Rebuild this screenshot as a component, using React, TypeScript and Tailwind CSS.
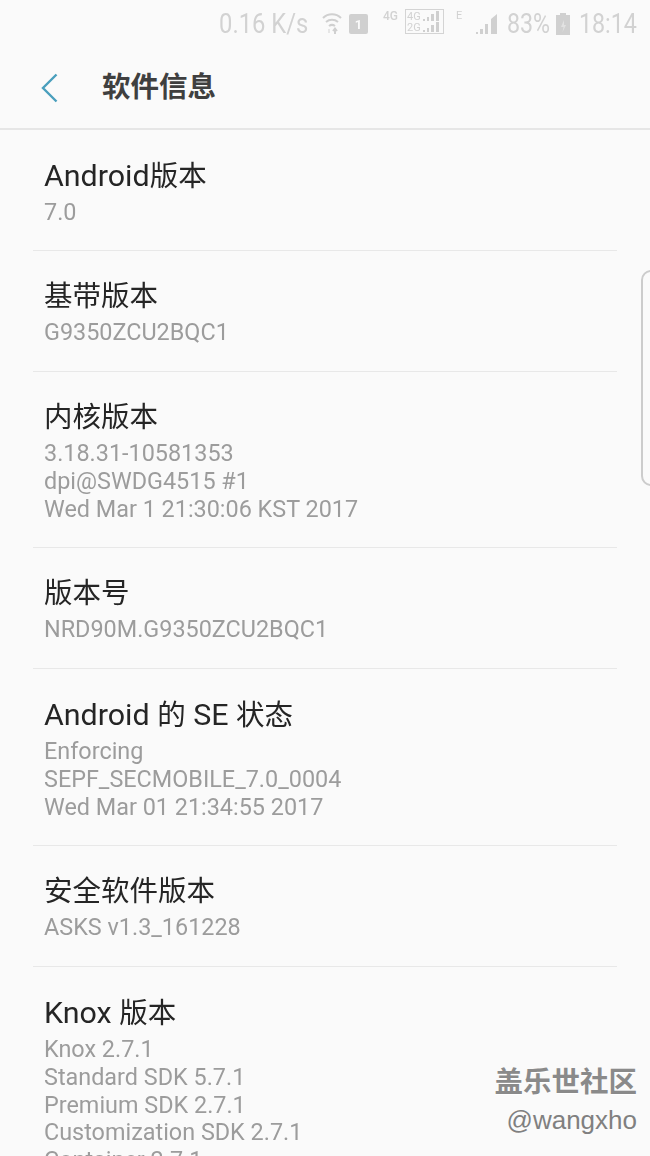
import React from "react";

interface InfoRow {
  title: string;
  lines: string[];
}

const cjkSans = "font-['Roboto','Noto_Sans_CJK_SC',sans-serif]";

const rows: InfoRow[] = [
  { title: "Android版本", lines: ["7.0"] },
  { title: "基带版本", lines: ["G9350ZCU2BQC1"] },
  {
    title: "内核版本",
    lines: ["3.18.31-10581353", "dpi@SWDG4515 #1", "Wed Mar 1 21:30:06 KST 2017"],
  },
  { title: "版本号", lines: ["NRD90M.G9350ZCU2BQC1"] },
  {
    title: "Android 的 SE 状态",
    lines: ["Enforcing", "SEPF_SECMOBILE_7.0_0004", "Wed Mar 01 21:34:55 2017"],
  },
  { title: "安全软件版本", lines: ["ASKS v1.3_161228"] },
  {
    title: "Knox 版本",
    lines: [
      "Knox 2.7.1",
      "Standard SDK 5.7.1",
      "Premium SDK 2.7.1",
      "Customization SDK 2.7.1",
      "Container 2.7.1",
    ],
  },
];

// latin runs sit a bit larger than the CJK ones in the device font
const Title = ({ text }: { text: string }) => (
  <div className="text-[28.500px] leading-[38px] text-[#252525]">
    {text.split(/([\x00-\x7f]+)/).map((part, i) =>
      /[\x00-\x7f]/.test(part) ? (
        <span key={i} className="text-[30.400px]">
          {part}
        </span>
      ) : (
        <span key={i}>{part}</span>
      )
    )}
  </div>
);

const Bars = () => (
  <svg width="16" height="10" viewBox="0 0 16 10" fill="#cfcfcf" className="ml-[2px]">
    <rect x="0" y="8" width="2" height="2" />
    <rect x="4" y="6" width="2" height="4" />
    <rect x="8" y="3" width="3" height="7" />
    <rect x="13" y="0" width="3" height="10" />
  </svg>
);

const StatusBar = () => (
  <div className="h-[48px] flex items-center justify-end pr-[14px] text-[#d2d2d2] blur-[0.4px]">
    <span className="w-[89px] text-[28px] leading-none whitespace-nowrap origin-left scale-x-[0.85] mr-[14px]">
      0.16 K/s
    </span>
    {/* wifi */}
    <svg width="20" height="23" viewBox="0 0 20 23" fill="none" stroke="#d0d0d0" strokeWidth="2" className="mr-[7px] mt-[-2px]">
      <path d="M1 6c5-5 13-5 18 0" />
      <path d="M4 10c3.500-3 8.500-3 12 0" />
      <path d="M7 14c2-1.500 4-1.500 6 0" />
      <path d="M13 22v-5M11 19l2-2.500 2 2.500" />
      <path d="M7 17v4" stroke="#e6e6e6" />
    </svg>
    {/* sim 1 */}
    <div className="w-[19px] h-[20px] bg-[#d0d0d0] rounded-[2px] mr-[15px] flex items-center justify-center text-[13px] font-bold text-[#fafafa] leading-none">
      1
    </div>
    <span className="w-[16px] text-[12px] leading-none font-medium self-start mt-[10px] mr-[6px]">4G</span>
    {/* dual sim signal box */}
    <div className="w-[39px] h-[25px] mt-[-5px] border border-[#d4d4d4] mr-[12px] text-[11px] leading-[11px] pl-[1px] flex flex-col justify-center">
      <div className="flex items-center">
        <span>4G</span>
        <Bars />
      </div>
      <div className="flex items-center">
        <span>2G</span>
        <Bars />
      </div>
    </div>
    <span className="w-[5px] text-[11px] leading-none self-start mt-[10px] mr-[15px]">E</span>
    {/* signal */}
    <svg width="21" height="22" viewBox="0 0 21 22" fill="#d0d0d0" className="mr-[10px]">
      <rect x="0" y="19" width="2" height="2" />
      <rect x="4" y="16" width="3" height="5" />
      <rect x="9" y="11" width="3" height="10" />
      <path d="M15 6l6-5v20h-6z" />
    </svg>
    <span className="w-[43px] text-[28px] leading-none whitespace-nowrap origin-left scale-x-[0.83] mr-[6px]">83%</span>
    {/* battery */}
    <svg width="14" height="22" viewBox="0 0 14 22" fill="#d0d0d0" className="mr-[9px]">
      <path d="M4 0h6v2h4v20H0V2h4z" />
      <path d="M8 7l-3 7h2.500l-1 5 3.500-7H8z" fill="#e2e2e2" />
    </svg>
    <span className="w-[57px] text-[28px] leading-none whitespace-nowrap origin-left scale-x-[0.83]">18:14</span>
  </div>
);

const Header = () => (
  <div className="h-[82px] flex items-center border-b-2 border-[#e6e6e6] pl-[41px]">
    <svg width="17" height="30" viewBox="0 0 17 30" fill="none" stroke="#4a9fbd" strokeWidth="2.400">
      <path d="M15.500 1.500L2 15l13.500 13.500" />
    </svg>
    <h1 className={`${cjkSans} ml-[44px] text-[28.500px] font-bold leading-none text-[#3f3f3f]`}>软件信息</h1>
  </div>
);

export default function App() {
  return (
    <div className={`relative h-[1156px] w-[650px] overflow-hidden bg-[#fafafa] ${cjkSans}`}>
      <StatusBar />
      <Header />
      <div className="px-[33px] mt-[-0.5px] blur-[0.3px]">
        {rows.map((row) => (
          <div key={row.title} className="border-b border-[#e8e8e8] pt-[27px] pb-[24px] px-[11px] last:border-b-0">
            <div className="mb-[3px]">
              <Title text={row.title} />
            </div>
            {row.lines.map((line) => (
              <div key={line} className="text-[23.400px] leading-[27.750px] text-[#9c9c9c] whitespace-nowrap">
                {line}
              </div>
            ))}
          </div>
        ))}
      </div>
      {/* edge panel handle */}
      <div className="absolute left-[641px] top-[270px] h-[216px] w-[20px] rounded-[10px] border-2 border-[#cccccc]" />
      {/* watermark */}
      <div className="absolute right-[13px] top-[1066px] flex flex-col items-end">
        <span className="text-[28.500px] leading-[34px] font-bold text-[#8a8a8a] [text-shadow:0_1px_0_#ffffff]">盖乐世社区</span>
        <span className="font-['Liberation_Sans',sans-serif] text-[26px] leading-[40px] text-[#808080]">@wangxho</span>
      </div>
    </div>
  );
}
